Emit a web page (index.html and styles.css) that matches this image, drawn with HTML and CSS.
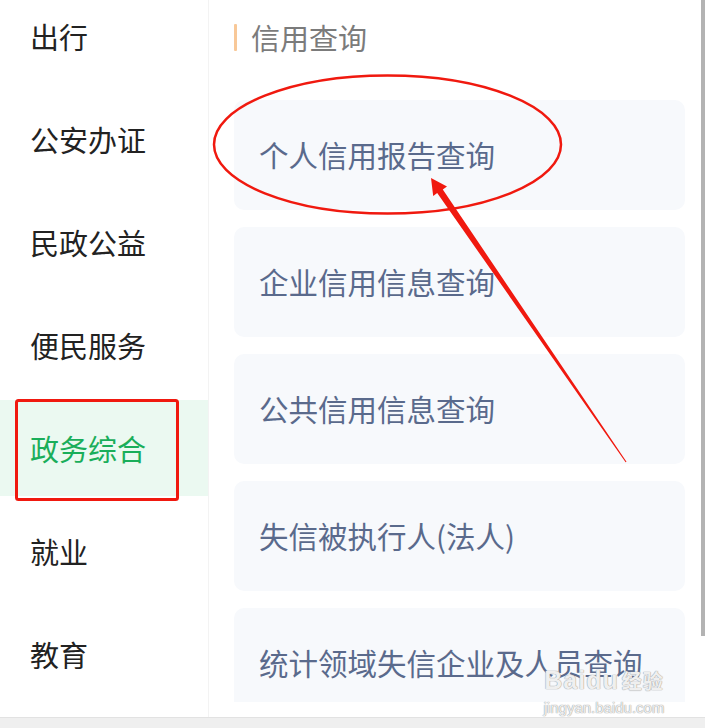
FILE: index.html
```html
<!doctype html>
<html>

<head>
  <meta charset="utf-8">
  <title>信用查询</title>
  <meta name="viewport" content="width=device-width, initial-scale=1">
  <link rel="stylesheet" href="styles.css">
</head>

<body>
  <div class="page">
    <div class="screen">
      <aside class="sidebar">
        <ul class="cat_list">
          <li class="cat_item">出行</li>
          <li class="cat_item">公安办证</li>
          <li class="cat_item">民政公益</li>
          <li class="cat_item">便民服务</li>
          <li class="cat_item cat_item_active">政务综合</li>
          <li class="cat_item">就业</li>
          <li class="cat_item">教育</li>
        </ul>
      </aside>

      <main class="content">
        <h2 class="section_title">信用查询</h2>
        <ul class="query_list">
          <li class="query_card">个人信用报告查询</li>
          <li class="query_card">企业信用信息查询</li>
          <li class="query_card">公共信用信息查询</li>
          <li class="query_card">失信被执行人(法人)</li>
          <li class="query_card">统计领域失信企业及人员查询</li>
        </ul>
      </main>

      <div class="scrollbar"></div>
    </div>
    <div class="bottom_bar"></div>

    <!-- annotations drawn over the screenshot -->
    <svg class="marks" width="705" height="728" viewBox="0 0 705 728">
      <rect x="16.5" y="400.5" width="161" height="99" rx="2" fill="none" stroke="#f0190f" stroke-width="3" />
      <ellipse cx="387.5" cy="144.5" rx="173.5" ry="69" fill="none" stroke="#f0190f" stroke-width="2.5" />
      <polygon fill="#f0190f"
        points="431,178 447,186.5 442.8,189.6 626.5,461.8 625.6,462.3 437.2,193 433.2,196" />
    </svg>

    <div class="watermark">
      <div class="wm_logo">Baidu<span class="wm_cn">经验</span></div>
      <div class="wm_url">jingyan.baidu.com</div>
    </div>
  </div>
</body>

</html>
```

FILE: styles.css
```css
* {
  margin: 0;
  padding: 0;
  box-sizing: border-box;
}

html,
body {
  width: 705px;
  height: 728px;
  overflow: hidden;
  background: #fff;
  font-family: "Noto Sans CJK SC", "Noto Sans", sans-serif;
}

ul {
  list-style: none;
}

.page {
  position: relative;
  width: 705px;
  height: 728px;
}

.screen {
  display: flex;
  height: 717px;
  overflow: hidden;
}

.sidebar {
  width: 209px;
  flex: none;
  border-right: 1px solid #f3f3f3;
}

.cat_list {
  display: flex;
  flex-direction: column;
  gap: 7px;
  margin-top: -12px;
}

.cat_item {
  height: 96px;
  display: flex;
  align-items: center;
  padding-left: 30px;
  font-size: 29px;
  line-height: 1;
  color: #222;
}

.cat_item_active {
  background: #ebf9f1;
  color: #1aae5a;
}

.content {
  flex: 1;
  display: flex;
  flex-direction: column;
  padding: 0 16px 15px 25px;
}

.section_title {
  height: 74px;
  margin-bottom: 26px;
  display: flex;
  align-items: center;
  font-size: 29px;
  font-weight: normal;
  line-height: 1;
  color: #7b7b7b;
}

.section_title:before {
  content: "";
  width: 3px;
  height: 27px;
  margin-right: 14px;
  background: #f8c898;
  border-radius: 1px;
}

.query_list {
  flex: 1;
  min-height: 0;
  overflow: hidden;
  display: flex;
  flex-direction: column;
  gap: 17px;
}

.query_card {
  height: 110px;
  flex: none;
  display: flex;
  align-items: center;
  padding-left: 25px;
  background: #f7f9fc;
  border-radius: 10px;
  font-size: 29.5px;
  line-height: 1;
  color: #5a6a8c;
}

.scrollbar {
  width: 4px;
  height: 636px;
  flex: none;
  background: #b3b3b3;
}

.bottom_bar {
  height: 11px;
  background: #efefef;
  border-top: 1px solid #e2e2e2;
}

.marks {
  position: absolute;
  left: 0;
  top: 0;
  pointer-events: none;
}

.watermark {
  position: absolute;
  left: 540px;
  top: 666px;
  width: 128px;
  color: rgba(255, 255, 255, 0.85);
  text-shadow: 0 0 1px #9a9a9a, 0 0 1px #9a9a9a;
  font-family: "Liberation Sans", Arial, sans-serif;
  text-align: center;
}

.wm_logo {
  font-size: 25px;
  font-weight: bold;
  line-height: 28px;
  letter-spacing: 1px;
}

.wm_cn {
  font-family: "Noto Sans CJK SC", sans-serif;
  font-size: 20px;
  margin-left: 3px;
}

.wm_url {
  font-size: 15px;
  line-height: 18px;
  margin-top: 4px;
}
```
